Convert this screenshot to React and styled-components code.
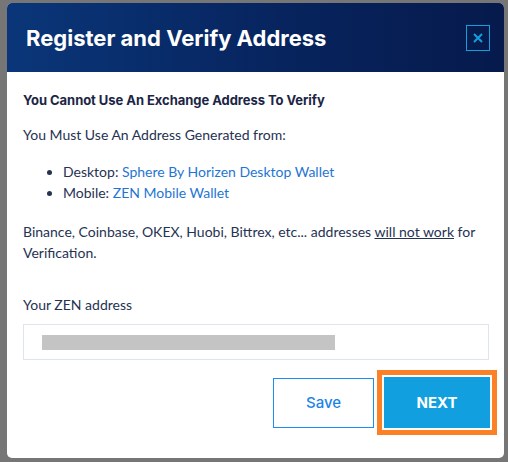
import React from "react";
import styled, { createGlobalStyle } from "styled-components";

const Global = createGlobalStyle`
  html, body { margin: 0; padding: 0; }
  body {
    background: #767676;
    font-family: Lato, "Liberation Sans", sans-serif;
    width: 508px;
    height: 462px;
    overflow: hidden;
  }
`;

const Overlay = styled.div`
  padding: 3px 4px 0 7px;
`;

const Dialog = styled.div`
  width: 497px;
  height: 455px;
  background: #fff;
  border-radius: 5px;
  overflow: hidden;
  display: flex;
  flex-direction: column;
`;

const Header = styled.div`
  height: 69px;
  flex: none;
  display: flex;
  align-items: center;
  justify-content: space-between;
  padding: 0 14px 0 19px;
  background: linear-gradient(90deg, #0a3679 0%, #07245e 55%, #061a4c 100%);
`;

const Title = styled.h1`
  margin: 0;
  color: #fff;
  font-family: Inter, "Liberation Sans", sans-serif;
  font-size: 22px;
  font-weight: 700;
`;

const CloseBtn = styled.button`
  width: 24px;
  height: 26px;
  padding: 0;
  border: 1px solid #129fe0;
  background: transparent;
  display: flex;
  align-items: center;
  justify-content: center;
  margin-top: 1px;
`;

const Body = styled.div`
  padding: 19px 15px 0 16px;
  color: #263253;
  font-size: 14px;
`;

const Heading = styled.p`
  margin: 0;
  font-family: Inter, "Liberation Sans", sans-serif;
  font-size: 13px;
  font-weight: 700;
  letter-spacing: -0.05px;
  color: #1b2545;
  line-height: 18px;
`;

const Text = styled.p`
  margin: ${(p) => p.$mt || 0}px 0 0;
  line-height: 21px;
`;

const List = styled.ul`
  margin: 16px 0 0;
  padding-left: 40px;
  line-height: 21px;
`;

const Link = styled.a`
  color: #1f76d2;
  text-decoration: none;
`;

const Label = styled.div`
  margin-top: 31px;
  line-height: 21px;
`;

const Input = styled.div`
  margin-top: 9px;
  width: 466px;
  height: 36px;
  box-sizing: border-box;
  border: 1px solid #dfe5ee;
  display: flex;
  align-items: center;
  padding-left: 18px;
`;

const Redact = styled.div`
  width: 293px;
  height: 15px;
  background: #c4c4c4;
`;

const Actions = styled.div`
  display: flex;
  justify-content: flex-end;
  align-items: center;
  gap: 3px;
  margin-top: 10px;
  margin-right: -8px;
`;

const SaveBtn = styled.button`
  width: 101px;
  height: 50px;
  box-sizing: border-box;
  border: 1px solid #1b8cf4;
  background: #fff;
  color: #1b84ea;
  font-family: Inter, "Liberation Sans", sans-serif;
  font-size: 15px;
  font-weight: 500;
`;

const Focus = styled.div`
  border: 5px solid #fc8126;
  padding: 2px;
`;

const NextBtn = styled.button`
  display: block;
  width: 106px;
  height: 51px;
  border: none;
  background: #129fe0;
  color: #fff;
  font-family: Inter, "Liberation Sans", sans-serif;
  font-size: 15px;
  font-weight: 700;
`;

export default function App() {
  return (
    <>
      <Global />
      <Overlay>
        <Dialog>
          <Header>
            <Title>Register and Verify Address</Title>
            <CloseBtn aria-label="close">
              <svg width="10" height="10" viewBox="0 0 10 10">
                <path d="M1 1L9 9M9 1L1 9" stroke="#129fe0" strokeWidth="2" />
              </svg>
            </CloseBtn>
          </Header>
          <Body>
            <Heading>You Cannot Use An Exchange Address To Verify</Heading>
            <Text $mt={15}>You Must Use An Address Generated from:</Text>
            <List>
              <li>
                Desktop: <Link>Sphere By Horizen Desktop Wallet</Link>
              </li>
              <li>
                Mobile: <Link>ZEN Mobile Wallet</Link>
              </li>
            </List>
            <Text $mt={18}>
              Binance, Coinbase, OKEX, Huobi, Bittrex, etc... addresses{" "}
              <u>will not work</u> for Verification.
            </Text>
            <Label>Your ZEN address</Label>
            <Input>
              <Redact />
            </Input>
            <Actions>
              <SaveBtn>Save</SaveBtn>
              <Focus>
                <NextBtn>NEXT</NextBtn>
              </Focus>
            </Actions>
          </Body>
        </Dialog>
      </Overlay>
    </>
  );
}
